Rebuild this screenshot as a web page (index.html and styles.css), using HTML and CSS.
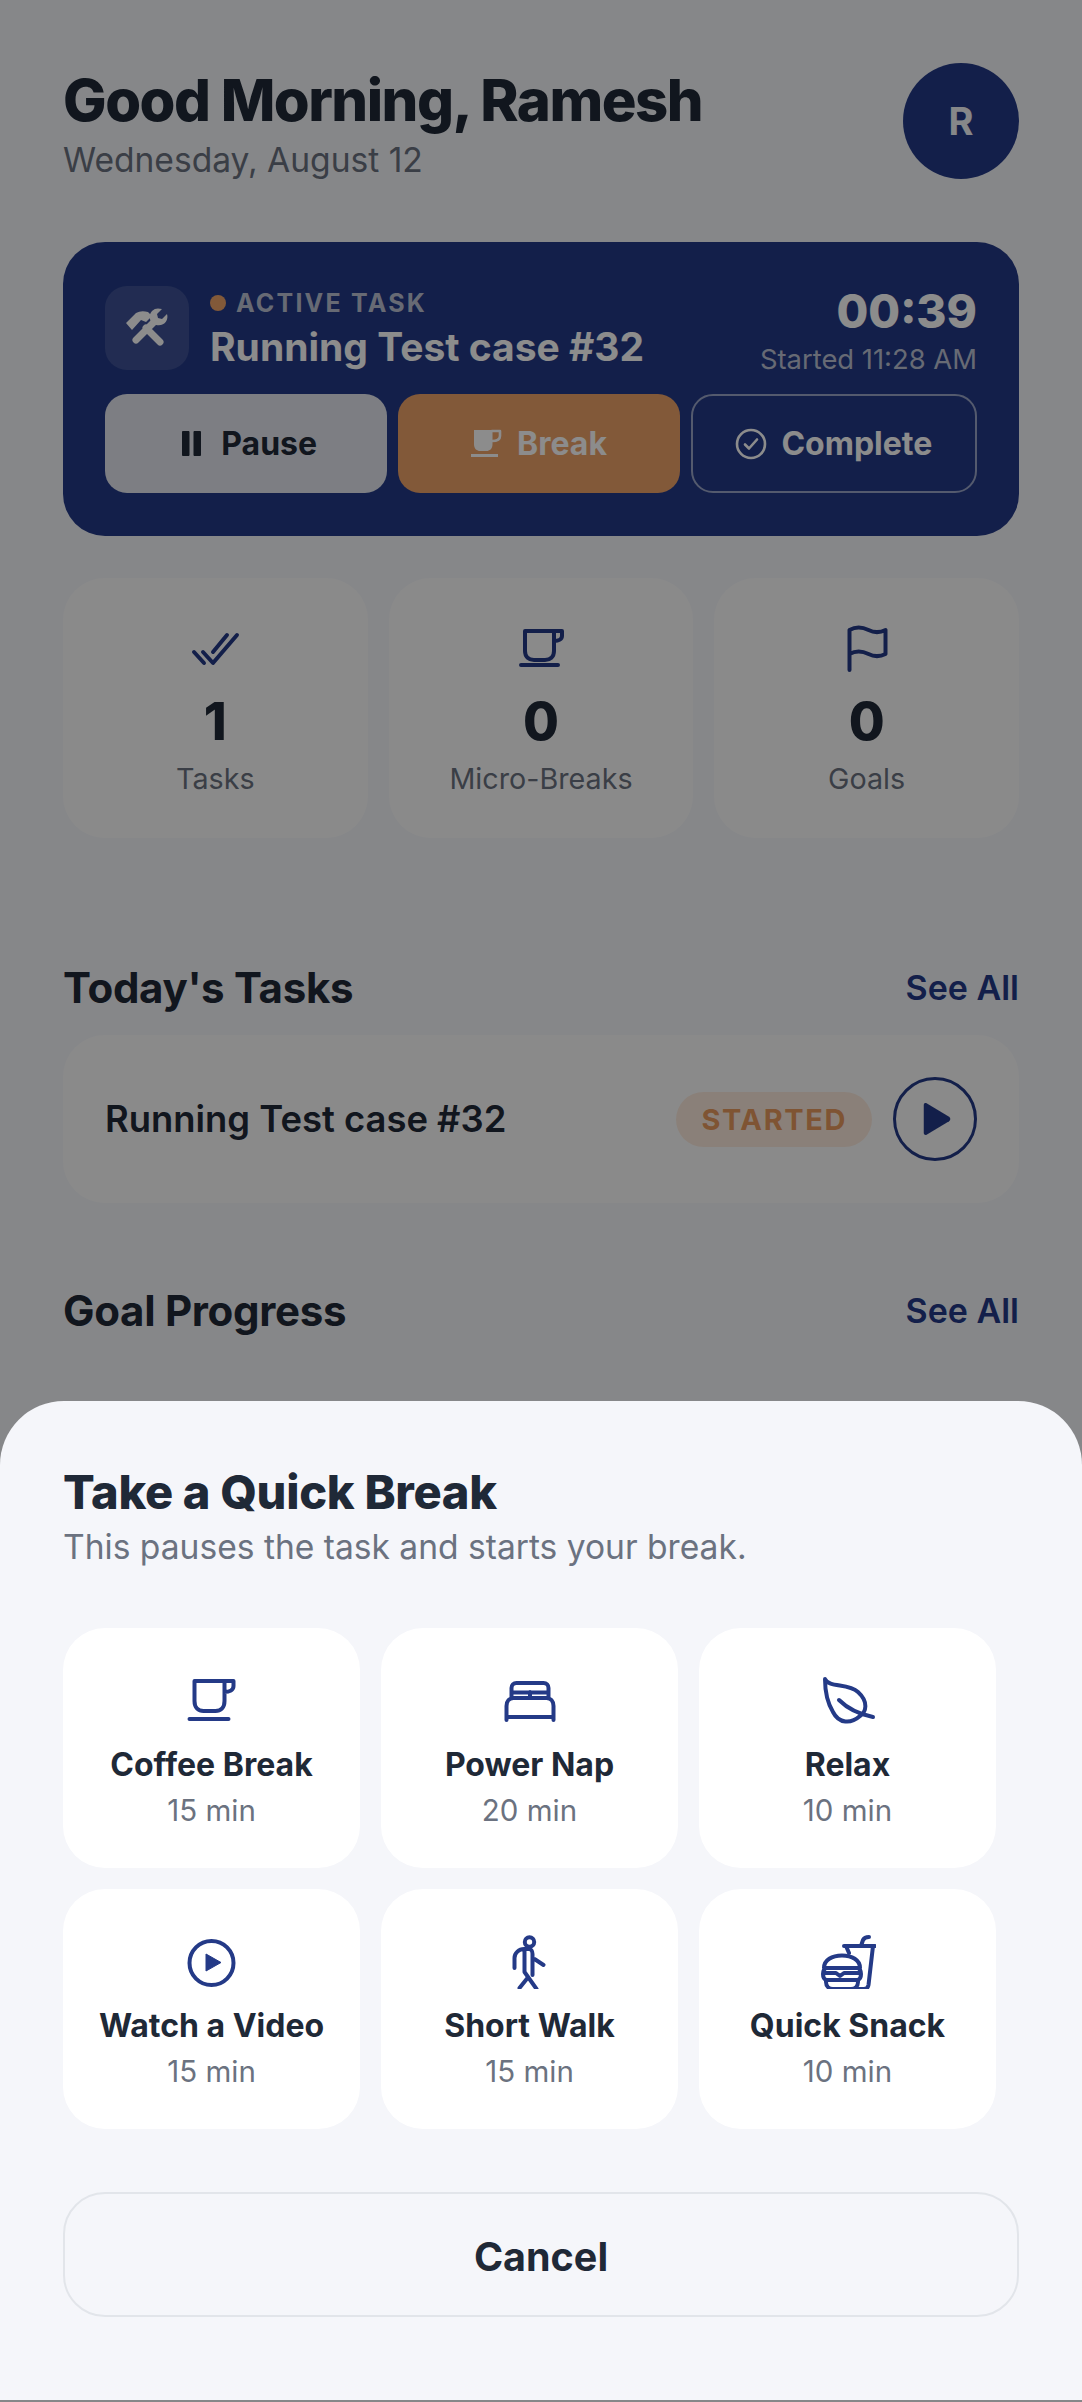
FILE: index.html
```html
<!DOCTYPE html>
<html lang="en">

<head>
    <meta charset="UTF-8">
    <meta name="viewport" content="width=device-width, initial-scale=1.0">
    <title>Dashboard</title>
    <link rel="stylesheet" href="styles.css">
</head>

<body>
    <div class="page">
        <header class="top">
            <div>
                <h1 class="hello">Good Morning, Ramesh</h1>
                <p class="today">Wednesday, August 12</p>
            </div>
            <div class="avatar">R</div>
        </header>

        <section class="active">
            <div class="active-head">
                <div class="tool-box">
                    <svg class="ico-tools" viewBox="0 0 44 44">
                        <path d="M1 17 11 7q5-3 12-1l4 4-6 6-5-2-9 10z" class="fillw" />
                        <path d="M37 3l-5 5 1 4 4 1 5-5c2 6-3 13-11 11-7-2-8-10-4-14 3-3 6-3 10-2z" class="fillw" />
                        <path d="M11 34 30 15M21 22l14 14" class="handle" />
                    </svg>
                </div>
                <div class="active-info">
                    <div class="active-label"><span class="dot"></span>ACTIVE TASK</div>
                    <div class="active-name">Running Test case #32</div>
                </div>
                <div class="active-time">
                    <div class="clock">00:39</div>
                    <div class="started">Started 11:28 AM</div>
                </div>
            </div>
            <div class="active-btns">
                <button class="btn btn-pause">
                    <svg class="ico-btn" viewBox="0 0 32 32"><path d="M8 3h5.500c.5 0 1 .5 1 1v23c0 .5-.5 1-1 1H8c-.5 0-1-.5-1-1V4c0-.5.5-1 1-1zM19.500 3H25c.5 0 1 .5 1 1v23c0 .5-.5 1-1 1h-5.500c-.5 0-1-.5-1-1V4c0-.5.5-1 1-1z" fill="currentColor" /></svg>
                    Pause
                </button>
                <button class="btn btn-break">
                    <svg class="ico-btn" viewBox="0 0 32 32"><path d="M3 2h18.500v14c0 5-3 7-6 7H9c-3 0-6-2-6-7z" fill="currentColor" /><path d="M21 3h8v5c0 3-3 5-8 5" class="line thin" /><path d="M0 26h27v3H0z" fill="currentColor" /></svg>
                    Break
                </button>
                <button class="btn btn-done">
                    <svg class="ico-btn" viewBox="0 0 32 32"><circle cx="16" cy="16" r="14" class="line thin" /><path d="m10 16.500 4 4 8-9" class="line thin" /></svg>
                    Complete
                </button>
            </div>
        </section>

        <section class="stats">
            <div class="stat">
                <svg class="ico" viewBox="0 0 56 56"><path d="m7 30 10 11M16 30l10 11 24-28M26 30l14-17" class="line" /></svg>
                <div class="stat-num">1</div>
                <div class="stat-name">Tasks</div>
            </div>
            <div class="stat">
                <svg class="ico" viewBox="0 0 56 56"><path d="M12 9h29v20c0 6-4 9-9 9H21c-5 0-9-3-9-9zM41 9h8v5c0 3-3 5-8 5M8 43h37" class="line" /></svg>
                <div class="stat-num">0</div>
                <div class="stat-name">Micro-Breaks</div>
            </div>
            <div class="stat">
                <svg class="ico" viewBox="0 0 56 56"><path d="M10.500 48V8c7-4 13-3 19 0 6 3 11 3 17 0v24c-6 3-11 3-17 0-6-3-12-4-19 0" class="line" /></svg>
                <div class="stat-num">0</div>
                <div class="stat-name">Goals</div>
            </div>
        </section>

        <div class="sec-head sec-tasks">
            <h2>Today's Tasks</h2>
            <a class="see-all">See All</a>
        </div>
        <div class="task">
            <div class="task-name">Running Test case #32</div>
            <span class="badge">STARTED</span>
            <div class="play-btn">
                <svg class="ico-play" viewBox="0 0 32 32"><path d="M6 3.500c0-1.500 1.500-2 2.500-1.500l20 12c1.500 1 1.500 3 0 4l-20 12c-1 .5-2.500 0-2.500-1.500z" /></svg>
            </div>
        </div>

        <div class="sec-head sec-goals">
            <h2>Goal Progress</h2>
            <a class="see-all">See All</a>
        </div>
    </div>

    <div class="shade"></div>

    <div class="sheet">
        <h3>Take a Quick Break</h3>
        <p class="sheet-sub">This pauses the task and starts your break.</p>

        <div class="breaks">
            <div class="brk">
                <svg class="ico" viewBox="0 0 56 56"><path d="M10.500 9h30v20c0 7-4 10-9 10h-12c-5 0-9-3-9-10zM40.500 9h9v5c0 4-4 6-9 6M5.500 47h39" class="line" /></svg>
                <div class="brk-name">Coffee Break</div>
                <div class="brk-time">15 min</div>
            </div>
            <div class="brk">
                <svg class="ico" viewBox="0 0 56 56"><path d="M4.500 48V34c0-5 3-8 7-8h33c4 0 7 3 7 8v14M4.500 45h47M9.500 26V16c0-3 2-5 5-5h27c3 0 5 2 5 5v10M9.500 20.500h37M28 20v6" class="line" /></svg>
                <div class="brk-name">Power Nap</div>
                <div class="brk-time">20 min</div>
            </div>
            <div class="brk">
                <svg class="ico" viewBox="0 0 56 56"><path d="M5 7c4 9 23 4 33 13 11 10 8 20 2 24-9 8-21 8-27-4C7 30 5 18 5 7zM19 28c9 9 19 14 34 17" class="line" /></svg>
                <div class="brk-name">Relax</div>
                <div class="brk-time">10 min</div>
            </div>
            <div class="brk">
                <svg class="ico" viewBox="0 0 56 56"><circle cx="27.500" cy="30" r="22" class="line" /><path d="M22 21v17l15-8.500z" class="solid" /></svg>
                <div class="brk-name">Watch a Video</div>
                <div class="brk-time">15 min</div>
            </div>
            <div class="brk">
                <svg class="ico" viewBox="0 0 56 56"><circle cx="27.500" cy="9" r="4.700" class="line" /><path d="M12.500 35V25c0-5 4.500-9 9.500-9h5c2 0 3.500 2 3.500 5v21M22.500 17v22l12 17M32.500 26l9 6M25.500 45l-8 10" class="line" /></svg>
                <div class="brk-name">Short Walk</div>
                <div class="brk-time">15 min</div>
            </div>
            <div class="brk">
                <svg class="ico" viewBox="0 0 56 56"><path d="M24 13h31M26 13l3 7M53 13l-4.500 39c-.5 3-2 4-4.500 4h-6M41 13l2-6c1-2 3-3 6-3" class="line" /><path d="M4 35c0-8 8-12.500 18-12.500S40 27 40 35zM6 35c-4 2-4 10 0 12h32c4-2 4-10 0-12M4 40h12l4 3 4-3h16M6 47v2c0 4 3 7 7 7h18c4 0 7-3 7-7v-2" class="line" /></svg>
                <div class="brk-name">Quick Snack</div>
                <div class="brk-time">10 min</div>
            </div>
        </div>

        <button class="cancel">Cancel</button>
    </div>
</body>

</html>
```

FILE: styles.css
```css
* {
    box-sizing: border-box;
}

html,
body {
    margin: 0;
    padding: 0;
    height: 2402px;
    overflow: hidden;
}

body {
    font-family: Inter, "Noto Sans", sans-serif;
    background-color: #f5f6fa;
    color: #1f2937;
    position: relative;
}

.page {
    padding: 63px 63px 0;
}

.line {
    fill: none;
    stroke: currentColor;
    stroke-width: 4;
    stroke-linecap: round;
    stroke-linejoin: round;
}

.line.thin {
    stroke-width: 2.6;
}

.solid {
    fill: currentColor;
    stroke: currentColor;
    stroke-width: 1;
    stroke-linejoin: round;
}

.ico {
    display: block;
    width: 56px;
    height: 56px;
    color: #243a87;
}

/* header */
.top {
    display: flex;
    justify-content: space-between;
    align-items: flex-start;
    height: 179px;
}

.hello {
    margin: 0;
    font-size: 58px;
    font-weight: 800;
    line-height: 75px;
    letter-spacing: -1.5px;
    color: #1f2937;
}

.today {
    margin: 2px 0 0;
    font-size: 33.6px;
    line-height: 40px;
    color: #6b7280;
}

.avatar {
    width: 116px;
    height: 116px;
    border-radius: 50%;
    background-color: #243a87;
    color: #f5f6fa;
    font-size: 38px;
    font-weight: 700;
    display: flex;
    align-items: center;
    justify-content: center;
}

/* active task card */
.active {
    height: 294px;
    background-color: #243a87;
    border-radius: 42px;
    padding: 44px 42px;
}

.active-head {
    display: flex;
    align-items: center;
    height: 84px;
}

.tool-box {
    width: 84px;
    height: 84px;
    border-radius: 22px;
    background-color: rgba(255, 255, 255, 0.12);
    display: flex;
    align-items: center;
    justify-content: center;
    margin-right: 21px;
}

.ico-tools {
    width: 44px;
    height: 44px;
}

.fillw {
    fill: #fff;
}

.handle {
    fill: none;
    stroke: #fff;
    stroke-width: 7;
    stroke-linecap: round;
}

.active-info {
    flex: 1;
    align-self: flex-start;
    padding-top: 2px;
}

.active-label {
    display: flex;
    align-items: center;
    font-size: 25px;
    line-height: 30px;
    font-weight: 700;
    letter-spacing: 2.2px;
    color: #bcc2d4;
}

.dot {
    width: 16px;
    height: 16px;
    border-radius: 50%;
    background-color: #eda269;
    margin-right: 10px;
}

.active-name {
    margin-top: 6px;
    font-size: 39px;
    line-height: 46px;
    font-weight: 700;
    color: #fff;
}

.active-time {
    align-self: flex-start;
    margin-top: -3px;
    text-align: right;
}

.clock {
    font-size: 46px;
    line-height: 56px;
    font-weight: 800;
    color: #fff;
}

.started {
    margin-top: 2px;
    font-size: 27.4px;
    line-height: 36px;
    color: #bcc2d4;
}

.active-btns {
    display: grid;
    grid-template-columns: 282fr 281fr 286fr;
    gap: 11px;
    margin-top: 24px;
}

.btn {
    height: 99px;
    border-radius: 22px;
    border: none;
    font-family: inherit;
    font-size: 32px;
    font-weight: 700;
    display: flex;
    align-items: center;
    justify-content: center;
    gap: 14px;
}

.ico-btn {
    width: 32px;
    height: 32px;
}

.btn-pause {
    background-color: #e3e6ef;
    color: #1f2937;
}

.btn-break {
    background-color: #eda269;
    color: #fff;
}

.btn-done {
    background-color: transparent;
    border: 2px solid #9aa5c8;
    color: #fff;
}

/* stats */
.stats {
    display: grid;
    grid-template-columns: repeat(3, 1fr);
    gap: 21px;
    margin-top: 42px;
}

.stat {
    height: 260px;
    background-color: #fcfcfc;
    border-radius: 42px;
    padding-top: 44px;
    display: flex;
    flex-direction: column;
    align-items: center;
}

.stat-num {
    font-size: 52px;
    line-height: 62px;
    font-weight: 800;
    margin-top: 13px;
}

.stat-name {
    font-size: 28.7px;
    line-height: 36px;
    margin-top: 8px;
    color: #6b7280;
}

/* sections */
.sec-head {
    display: flex;
    justify-content: space-between;
    align-items: center;
    height: 48px;
}

.sec-tasks {
    margin-top: 125px;
}

.sec-goals {
    margin-top: 83px;
}

.sec-head h2 {
    margin: 0;
    font-size: 42px;
    font-weight: 700;
    letter-spacing: -0.3px;
}

.see-all {
    font-size: 34px;
    font-weight: 600;
    color: #243a87;
}

.task {
    height: 168px;
    margin-top: 24px;
    background-color: #fcfcfc;
    border-radius: 42px;
    padding: 0 42px;
    display: flex;
    align-items: center;
}

.task-name {
    flex: 1;
    font-size: 36.4px;
    font-weight: 600;
}

.badge {
    height: 55px;
    line-height: 55px;
    padding: 0 25px;
    border-radius: 28px;
    background-color: #fbeadd;
    color: #e89a5e;
    font-size: 29px;
    font-weight: 700;
    letter-spacing: 1.6px;
}

.play-btn {
    width: 84px;
    height: 84px;
    margin-left: 21px;
    border: 3px solid #243a87;
    border-radius: 50%;
    display: flex;
    align-items: center;
    justify-content: center;
}

.ico-play {
    width: 36px;
    height: 36px;
    fill: #243a87;
}

/* dim layer and bottom sheet */
.shade {
    position: absolute;
    inset: 0;
    background-color: rgba(0, 0, 0, 0.45);
}

.sheet {
    position: absolute;
    left: 0;
    right: 0;
    top: 1401px;
    height: 999px;
    background-color: #f5f6fa;
    border-radius: 64px 64px 0 0;
    padding: 63px 63px 0;
}

.sheet h3 {
    margin: 0;
    font-size: 47px;
    line-height: 56px;
    font-weight: 800;
    letter-spacing: -0.3px;
}

.sheet-sub {
    margin: 5px 0 0;
    font-size: 33.6px;
    line-height: 44px;
    color: #6b7280;
}

.breaks {
    display: grid;
    grid-template-columns: 297px 297px 297px;
    gap: 21px;
    margin-top: 59px;
}

.brk {
    height: 240px;
    background-color: #fff;
    border-radius: 42px;
    padding-top: 44px;
    display: flex;
    flex-direction: column;
    align-items: center;
}

.brk-name {
    margin-top: 17px;
    font-size: 32px;
    line-height: 40px;
    font-weight: 700;
}

.brk-time {
    margin-top: 7px;
    font-size: 29.5px;
    line-height: 36px;
    color: #6b7280;
}

.cancel {
    display: block;
    width: 100%;
    height: 125px;
    margin-top: 63px;
    padding-top: 5px;
    background-color: transparent;
    border: 2px solid #e2e5ea;
    border-radius: 42px;
    font-family: inherit;
    font-size: 39.5px;
    font-weight: 700;
    color: #1f2937;
}
```
